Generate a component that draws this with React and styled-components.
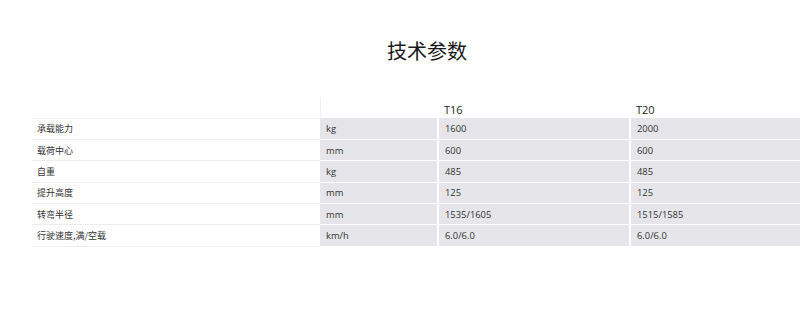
import React from 'react'
import styled, { createGlobalStyle } from 'styled-components'

const GlobalStyle = createGlobalStyle`
  html, body {
    margin: 0;
    padding: 0;
    background: #fff;
    overflow: hidden;
  }
  body {
    font-family: "Noto Sans", "Noto Sans CJK SC", sans-serif;
    color: #333;
  }
`

const Page = styled.div`
  width: 800px;
  height: 320px;
  overflow: hidden;
  padding-left: 32px;
  box-sizing: border-box;
`

const Section = styled.section`
  width: 790px;
`

const Title = styled.h2`
  margin: 0;
  padding-top: 37px;
  height: 97px;
  box-sizing: border-box;
  text-align: center;
  font-family: "Noto Sans CJK SC", sans-serif;
  font-size: 20px;
  font-weight: 400;
  line-height: 28px;
  color: #1a1a1a;
`

const Table = styled.table`
  width: 790px;
  border-collapse: collapse;
  table-layout: fixed;
`

const HeadCell = styled.th`
  height: 21px;
  padding: 0 0 1px 6px;
  vertical-align: bottom;
  text-align: left;
  font-family: "Open Sans", sans-serif;
  font-size: 11px;
  line-height: 14px;
  font-weight: 400;
  color: #222;
  border-bottom: 1px solid ${(p) => (p.$first ? '#ededed' : 'transparent')};
  border-left: ${(p) => (p.$unit ? '1px solid #f0f0f0' : 'none')};
  box-sizing: border-box;
`

const Row = styled.tr`
  height: 21.4px;
`

const Label = styled.td`
  padding: 0 0 0 5px;
  font-family: "Noto Sans CJK SC", sans-serif;
  font-size: 9px;
  color: #333;
  border-bottom: 1px solid #ededed;
  white-space: nowrap;
`

const Value = styled.td`
  padding: 0 0 0 6px;
  background: #e6e6ea;
  font-family: "Open Sans", sans-serif;
  font-size: 9.4px;
  color: #333;
  border-bottom: 1px solid #fff;
  border-right: 2px solid #fff;
  white-space: nowrap;
`

const columns = ['T16', 'T20']

const specs = [
  { name: '承载能力', unit: 'kg', values: ['1600', '2000'] },
  { name: '载荷中心', unit: 'mm', values: ['600', '600'] },
  { name: '自重', unit: 'kg', values: ['485', '485'] },
  { name: '提升高度', unit: 'mm', values: ['125', '125'] },
  { name: '转弯半径', unit: 'mm', values: ['1535/1605', '1515/1585'] },
  { name: '行驶速度,满/空载', unit: 'km/h', values: ['6.0/6.0', '6.0/6.0'] },
]

const App = () => (
  <Page>
    <GlobalStyle />
    <Section>
      <Title>技术参数</Title>
      <Table>
        <colgroup>
          <col style={{ width: 288 }} />
          <col style={{ width: 118 }} />
          <col style={{ width: 192 }} />
          <col style={{ width: 192 }} />
        </colgroup>
        <thead>
          <tr>
            <HeadCell $first />
            <HeadCell $unit />
            {columns.map((c) => (
              <HeadCell key={c}>{c}</HeadCell>
            ))}
          </tr>
        </thead>
        <tbody>
          {specs.map((s) => (
            <Row key={s.name}>
              <Label>{s.name}</Label>
              <Value>{s.unit}</Value>
              {s.values.map((v, i) => (
                <Value key={i}>{v}</Value>
              ))}
            </Row>
          ))}
        </tbody>
      </Table>
    </Section>
  </Page>
)

export default App
